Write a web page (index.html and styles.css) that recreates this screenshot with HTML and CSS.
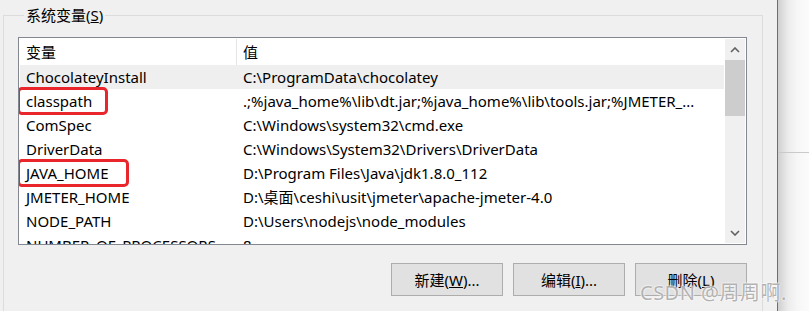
FILE: index.html
```html
<!DOCTYPE html>
<html lang="zh-CN">
<head>
    <meta charset="UTF-8">
    <title>环境变量</title>
    <link rel="stylesheet" href="styles.css">
</head>
<body>
<div class="screen">
    <div class="dialog">
        <fieldset class="group">
            <legend>系统变量(<u>S</u>)</legend>
            <div class="listview">
                <div class="list-body">
                    <div class="list-head">
                        <div class="cell">变量</div>
                        <div class="cell">值</div>
                    </div>
                    <div class="row hover">
                        <div class="cell">ChocolateyInstall</div>
                        <div class="cell">C:\ProgramData\chocolatey</div>
                    </div>
                    <div class="row">
                        <div class="cell marked"><span class="mark mark-a">classpath</span></div>
                        <div class="cell">.;%java_home%\lib\dt.jar;%java_home%\lib\tools.jar;%JMETER_...</div>
                    </div>
                    <div class="row">
                        <div class="cell">ComSpec</div>
                        <div class="cell">C:\Windows\system32\cmd.exe</div>
                    </div>
                    <div class="row">
                        <div class="cell">DriverData</div>
                        <div class="cell">C:\Windows\System32\Drivers\DriverData</div>
                    </div>
                    <div class="row">
                        <div class="cell marked"><span class="mark mark-b">JAVA_HOME</span></div>
                        <div class="cell">D:\Program Files\Java\jdk1.8.0_112</div>
                    </div>
                    <div class="row">
                        <div class="cell">JMETER_HOME</div>
                        <div class="cell">D:\桌面\ceshi\usit\jmeter\apache-jmeter-4.0</div>
                    </div>
                    <div class="row">
                        <div class="cell">NODE_PATH</div>
                        <div class="cell">D:\Users\nodejs\node_modules</div>
                    </div>
                    <div class="row">
                        <div class="cell">NUMBER_OF_PROCESSORS</div>
                        <div class="cell">8</div>
                    </div>
                </div>
                <div class="scrollbar">
                    <div class="arrow">
                        <svg width="10" height="6" viewBox="0 0 10 6"><polyline points="1,5 5,1 9,5" fill="none" stroke="#606060" stroke-width="1.6"/></svg>
                    </div>
                    <div class="thumb"></div>
                    <div class="track"></div>
                    <div class="arrow">
                        <svg width="10" height="6" viewBox="0 0 10 6"><polyline points="1,1 5,5 9,1" fill="none" stroke="#606060" stroke-width="1.6"/></svg>
                    </div>
                </div>
            </div>
            <div class="buttons">
                <button class="btn">新建(<u>W</u>)...</button>
                <button class="btn">编辑(<u>I</u>)...</button>
                <button class="btn">删除(<u>L</u>)</button>
            </div>
        </fieldset>
    </div>
    <div class="backdrop">
        <div class="backdrop-line"></div>
    </div>
    <div class="watermark">CSDN @周周啊.</div>
</div>
</body>
</html>
```

FILE: styles.css
```css
body {
    margin: 0;
    padding: 0;
    background: #f0f0f0;
    overflow: hidden;
    font-family: "Noto Sans", "Noto Sans CJK SC", sans-serif;
    font-size: 15px;
    color: #000;
}

.screen {
    position: relative;
    display: flex;
    height: 311px;
    overflow: hidden;
}

/* 对话框主体，右侧深色边 */
.dialog {
    width: 778px;
    flex: none;
    border-right: 1px solid #6e6e6e;
    padding-top: 6px;
    box-sizing: border-box;
}

.group {
    margin: 0 0 0 3px;
    padding: 13px 0 0 14px;
    width: 760px;
    height: 340px;
    box-sizing: border-box;
    border: 1px solid #dcdcdc;
    min-width: 0;
}

.group legend {
    margin-left: 6px;
    padding: 0 2px;
    line-height: 18px;
    font-size: 15px;
}

.listview {
    display: flex;
    width: 729px;
    height: 208px;
    box-sizing: border-box;
    border: 1px solid #828790;
    background: #fff;
    padding: 1px 0 0 1px;
    overflow: hidden;
}

.list-body {
    flex: 1;
    margin-right: 1px;
}

.list-head,
.row {
    display: grid;
    grid-template-columns: 217px 1fr;
}

.list-head {
    height: 26px;
    line-height: 26px;
}

.list-head .cell:first-child {
    border-right: 1px solid #e5e5e5;
}

.row {
    height: 24px;
    line-height: 24px;
}

.row.hover {
    background: #efefef;
}

.cell {
    padding-left: 6px;
    white-space: nowrap;
    overflow: hidden;
}

.cell.marked {
    overflow: visible;
}

/* 红框标注 */
.mark {
    position: relative;
    display: inline-block;
}

.mark::after {
    content: '';
    position: absolute;
    left: -9px;
    border: 3px solid #e8262b;
    border-radius: 5px;
}

.mark-a::after {
    top: -2px;
    width: 85px;
    height: 22px;
}

.mark-b::after {
    top: -2px;
    width: 106px;
    height: 22px;
}

.scrollbar {
    width: 20px;
    flex: none;
    display: flex;
    flex-direction: column;
    background: #f0f0f0;
    margin-right: 1px;
    height: 204px;
}

.arrow {
    height: 21px;
    display: flex;
    align-items: center;
    justify-content: center;
}

.thumb {
    height: 56px;
    background: #cdcdcd;
}

.track {
    flex: 1;
}

.buttons {
    display: flex;
    justify-content: flex-end;
    gap: 10px;
    width: 729px;
    margin-top: 18px;
}

.btn {
    width: 112px;
    height: 33px;
    background: #e1e1e1;
    border: 1px solid #adadad;
    font-family: inherit;
    font-size: 15px;
    color: #000;
    padding: 0;
}

.backdrop {
    flex: 1;
    background: linear-gradient(to right, #cfcfcf, #ececec 10px, #f7f7f7 20px, #fbfbfb);
}

.backdrop-line {
    margin-top: 152px;
    border-top: 1px solid #cacaca;
}

.watermark {
    position: absolute;
    left: 640px;
    top: 280px;
    font-size: 20px;
    line-height: 26px;
    color: rgba(165, 165, 165, 0.85);
    text-shadow: 0 0 2px #fff, 0 0 2px #fff;
    letter-spacing: 0.5px;
}
```
